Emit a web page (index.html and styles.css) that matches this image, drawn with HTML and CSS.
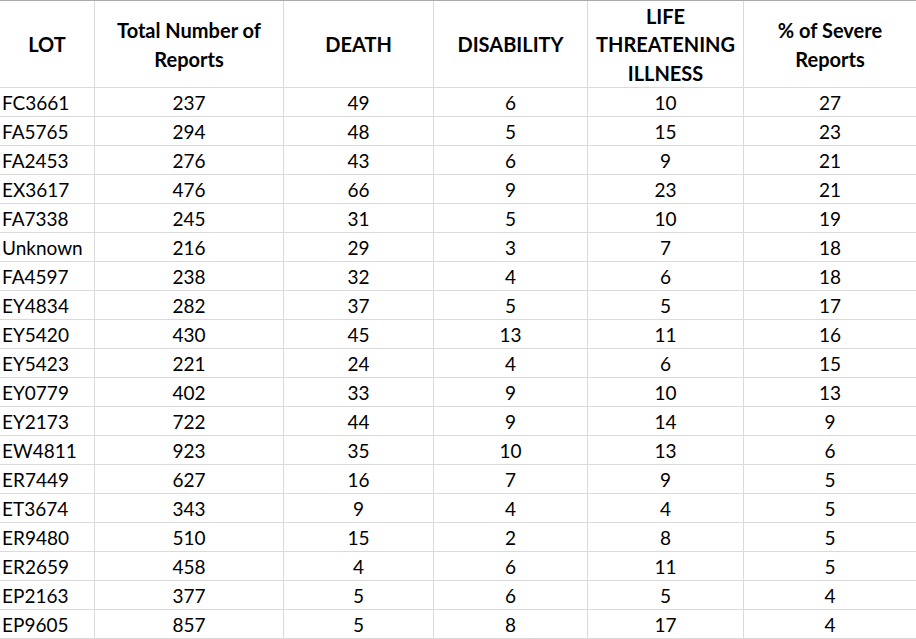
FILE: index.html
```html
<!DOCTYPE html>
<html>
<head>
<meta charset="utf-8">
<link rel="stylesheet" href="styles.css">
</head>
<body>
<div class="sheet">
  <div class="cell head lot">LOT</div>
  <div class="cell head">Total Number of<br>Reports</div>
  <div class="cell head">DEATH</div>
  <div class="cell head">DISABILITY</div>
  <div class="cell head">LIFE<br>THREATENING<br>ILLNESS</div>
  <div class="cell head last">% of Severe<br>Reports</div>

  <div class="cell lot">FC3661</div><div class="cell">237</div><div class="cell">49</div><div class="cell">6</div><div class="cell">10</div><div class="cell last">27</div>
  <div class="cell lot">FA5765</div><div class="cell">294</div><div class="cell">48</div><div class="cell">5</div><div class="cell">15</div><div class="cell last">23</div>
  <div class="cell lot">FA2453</div><div class="cell">276</div><div class="cell">43</div><div class="cell">6</div><div class="cell">9</div><div class="cell last">21</div>
  <div class="cell lot">EX3617</div><div class="cell">476</div><div class="cell">66</div><div class="cell">9</div><div class="cell">23</div><div class="cell last">21</div>
  <div class="cell lot">FA7338</div><div class="cell">245</div><div class="cell">31</div><div class="cell">5</div><div class="cell">10</div><div class="cell last">19</div>
  <div class="cell lot">Unknown</div><div class="cell">216</div><div class="cell">29</div><div class="cell">3</div><div class="cell">7</div><div class="cell last">18</div>
  <div class="cell lot">FA4597</div><div class="cell">238</div><div class="cell">32</div><div class="cell">4</div><div class="cell">6</div><div class="cell last">18</div>
  <div class="cell lot">EY4834</div><div class="cell">282</div><div class="cell">37</div><div class="cell">5</div><div class="cell">5</div><div class="cell last">17</div>
  <div class="cell lot">EY5420</div><div class="cell">430</div><div class="cell">45</div><div class="cell">13</div><div class="cell">11</div><div class="cell last">16</div>
  <div class="cell lot">EY5423</div><div class="cell">221</div><div class="cell">24</div><div class="cell">4</div><div class="cell">6</div><div class="cell last">15</div>
  <div class="cell lot">EY0779</div><div class="cell">402</div><div class="cell">33</div><div class="cell">9</div><div class="cell">10</div><div class="cell last">13</div>
  <div class="cell lot">EY2173</div><div class="cell">722</div><div class="cell">44</div><div class="cell">9</div><div class="cell">14</div><div class="cell last">9</div>
  <div class="cell lot">EW4811</div><div class="cell">923</div><div class="cell">35</div><div class="cell">10</div><div class="cell">13</div><div class="cell last">6</div>
  <div class="cell lot">ER7449</div><div class="cell">627</div><div class="cell">16</div><div class="cell">7</div><div class="cell">9</div><div class="cell last">5</div>
  <div class="cell lot">ET3674</div><div class="cell">343</div><div class="cell">9</div><div class="cell">4</div><div class="cell">4</div><div class="cell last">5</div>
  <div class="cell lot">ER9480</div><div class="cell">510</div><div class="cell">15</div><div class="cell">2</div><div class="cell">8</div><div class="cell last">5</div>
  <div class="cell lot">ER2659</div><div class="cell">458</div><div class="cell">4</div><div class="cell">6</div><div class="cell">11</div><div class="cell last">5</div>
  <div class="cell lot">EP2163</div><div class="cell">377</div><div class="cell">5</div><div class="cell">6</div><div class="cell">5</div><div class="cell last">4</div>
  <div class="cell lot">EP9605</div><div class="cell">857</div><div class="cell">5</div><div class="cell">8</div><div class="cell">17</div><div class="cell last">4</div>
</div>
</body>
</html>
```
FILE: styles.css
```css
html, body {
  margin: 0;
  padding: 0;
  background: #ffffff;
}
.sheet {
  display: grid;
  grid-template-columns: 95px 189px 150px 154px 156px 1fr;
  grid-template-rows: 87px repeat(19, 29px);
  width: 916px;
  border-top: 1px solid #ababab;
  font-family: Lato, "Liberation Sans", sans-serif;
  font-size: 19px;
  color: #000000;
}
.cell {
  box-sizing: border-box;
  border-right: 1px solid #dadada;
  border-bottom: 1px solid #dadada;
  display: flex;
  align-items: center;
  justify-content: center;
  text-align: center;
  white-space: nowrap;
  line-height: 28.5px;
  padding-top: 2px;
}
.cell.last {
  border-right: none;
}
.cell.lot {
  justify-content: flex-start;
  padding-left: 2px;
}
.cell.head {
  font-weight: bold;
  font-size: 20px;
  padding-top: 1px;
}
.cell.head.lot {
  justify-content: center;
  padding-left: 0;
}
```
